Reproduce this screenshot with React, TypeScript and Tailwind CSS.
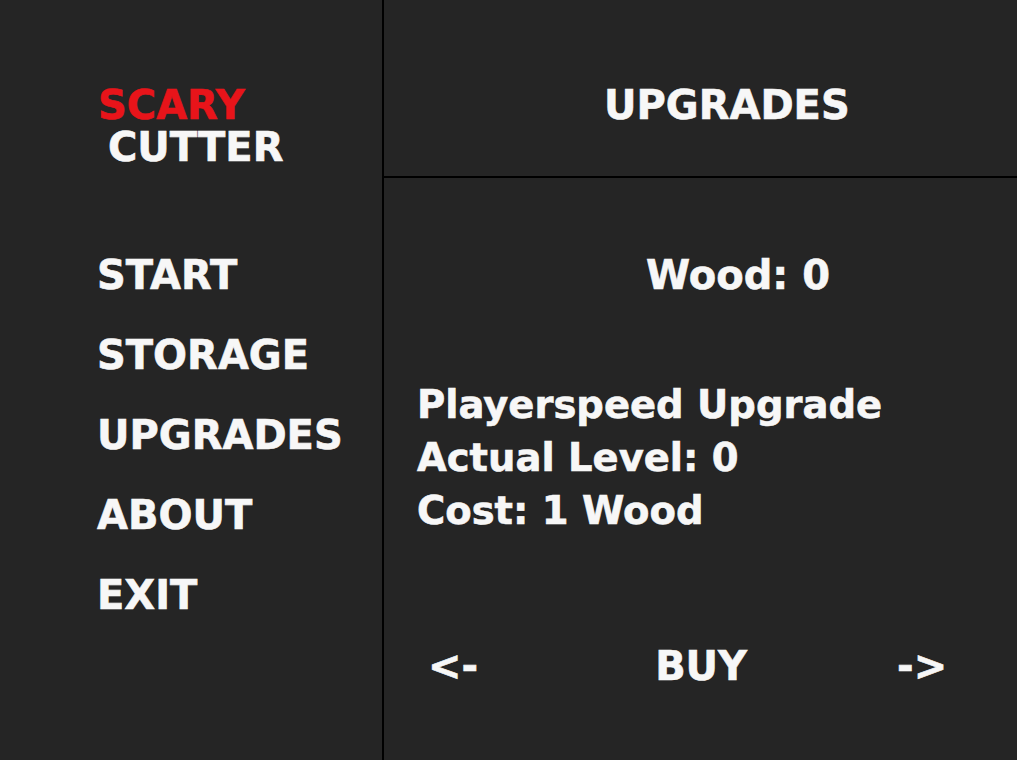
const menuItems = ["START", "STORAGE", "UPGRADES", "ABOUT", "EXIT"];

export default function App() {
  return (
    <div
      className="flex h-[760px] w-[1017px] overflow-hidden bg-[#252525] font-bold text-[40px] leading-[42px] text-[#f7f7f7] [-webkit-text-stroke:0.6px_currentcolor]"
      style={{ fontFamily: '"DejaVu Sans", Verdana, sans-serif' }}
    >
      {/* left menu */}
      <aside className="flex w-[384px] shrink-0 flex-col border-r-2 border-black">
        <div className="pl-[98px] pt-[84px]">
          <div className="text-[#e8141a]">SCARY</div>
          <div className="pl-[10px]">CUTTER</div>
        </div>
        <nav className="mt-[86px] flex flex-col gap-[38px] pl-[97px]">
          {menuItems.map((item) => (
            <div key={item}>{item}</div>
          ))}
        </nav>
      </aside>

      {/* upgrades panel */}
      <main className="flex flex-1 flex-col">
        <header className="h-[178px] border-b-2 border-black pl-[220px] pt-[84px]">
          UPGRADES
        </header>
        <section className="flex flex-1 flex-col">
          <div className="mt-[76px] pl-[262px]">Wood: 0</div>
          <div className="mt-[82px] flex flex-col pl-[33px] text-[38.5px] leading-[53px]">
            <div>Playerspeed Upgrade</div>
            <div>Actual Level: 0</div>
            <div>Cost: 1 Wood</div>
          </div>
          <div className="mt-[108px] flex items-center pl-[44px]">
            <button className="cursor-pointer">&lt;-</button>
            <button className="ml-[177px] cursor-pointer">BUY</button>
            <button className="ml-[150px] cursor-pointer">-&gt;</button>
          </div>
        </section>
      </main>
    </div>
  );
}
